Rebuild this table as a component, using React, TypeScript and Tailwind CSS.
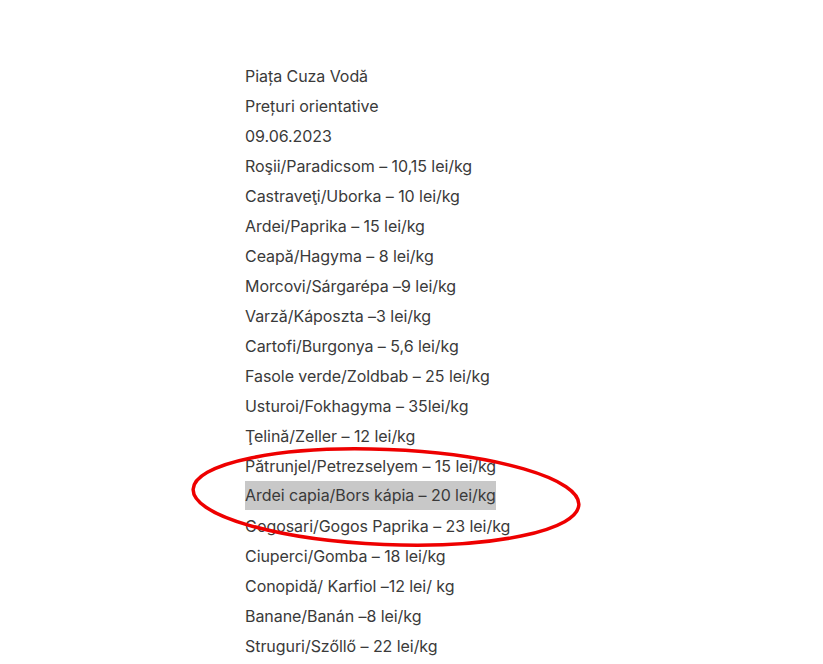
const lines = [
  'Piața Cuza Vodă',
  'Prețuri orientative',
  '09.06.2023',
  'Roşii/Paradicsom – 10,15 lei/kg',
  'Castraveţi/Uborka – 10 lei/kg',
  'Ardei/Paprika – 15 lei/kg',
  'Ceapă/Hagyma – 8 lei/kg',
  'Morcovi/Sárgarépa –9 lei/kg',
  'Varză/Káposzta –3 lei/kg',
  'Cartofi/Burgonya – 5,6 lei/kg',
  'Fasole verde/Zoldbab – 25 lei/kg',
  'Usturoi/Fokhagyma – 35lei/kg',
  'Ţelină/Zeller – 12 lei/kg',
  'Pătrunjel/Petrezselyem – 15 lei/kg',
  'Ardei capia/Bors kápia – 20 lei/kg',
  'Gogosari/Gogos Paprika – 23 lei/kg',
  'Ciuperci/Gomba – 18 lei/kg',
  'Conopidă/ Karfiol –12 lei/ kg',
  'Banane/Banán –8 lei/kg',
  'Struguri/Szőllő – 22 lei/kg',
]

export default function App() {
  return (
    <div className="relative w-[823px] h-[664px] overflow-hidden bg-white">
      <div
        className="pt-[61px] pl-[245px] text-[16px] leading-[30px] tracking-[-0.06px] text-[#3a3a3a]"
        style={{ fontFamily: 'Inter, "Noto Sans", sans-serif' }}
      >
        {lines.map((line, i) => (
          <div key={i} className="whitespace-nowrap">
            {i === 14 ? (
              <span className="inline-block bg-[#c8c8c8] leading-[29px] align-top">{line}</span>
            ) : (
              line
            )}
          </div>
        ))}
      </div>

      {/* red marker circle */}
      <svg
        className="absolute left-0 top-0 pointer-events-none"
        width="823"
        height="664"
        viewBox="0 0 823 664"
      >
        <ellipse
          cx="386"
          cy="497"
          rx="193"
          ry="47.5"
          transform="rotate(2.3 386 497)"
          fill="none"
          stroke="#ee0000"
          strokeWidth="3.5"
        />
      </svg>
    </div>
  )
}
